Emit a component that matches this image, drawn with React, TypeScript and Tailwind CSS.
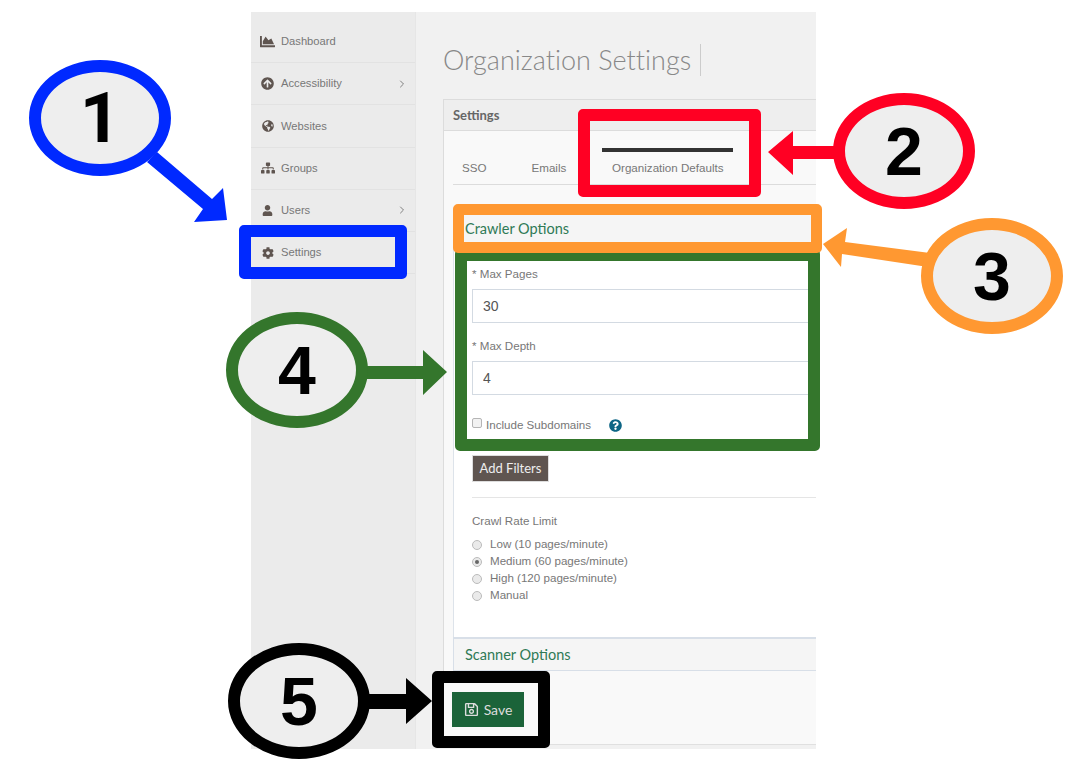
import { FaChartArea, FaArrowCircleUp, FaGlobeAmericas, FaSitemap, FaUser, FaCog, FaRegSave, FaQuestionCircle } from "react-icons/fa";
import { ChevronRight } from "lucide-react";
import type { IconType } from "react-icons";

type NavItem = { label: string; icon: IconType; size: string; sub?: boolean };

const NAV: NavItem[] = [
  { label: "Dashboard", icon: FaChartArea, size: "text-[15px]" },
  { label: "Accessibility", icon: FaArrowCircleUp, size: "text-[13px]", sub: true },
  { label: "Websites", icon: FaGlobeAmericas, size: "text-[12px]" },
  { label: "Groups", icon: FaSitemap, size: "text-[14px]" },
  { label: "Users", icon: FaUser, size: "text-[11px]", sub: true },
  { label: "Settings", icon: FaCog, size: "text-[12px]" },
];

const RATES = [
  { label: "Low (10 pages/minute)", checked: false },
  { label: "Medium (60 pages/minute)", checked: true },
  { label: "High (120 pages/minute)", checked: false },
  { label: "Manual", checked: false },
];

function Sidebar() {
  return (
    <aside className="w-[165px] shrink-0 border-r border-[#e6e6e6] bg-[#ebebeb] pt-[9px]">
      {NAV.map(({ label, icon: Icon, size, sub }) => (
        <div key={label} className="flex h-[42.2px] items-center border-b border-[#e2e2e2] pl-[10px] pr-[7px] text-[11.2px] text-[#777]">
          <span className="flex w-[13px] shrink-0 justify-center"><Icon className={`shrink-0 text-[#5f5550] ${size}`} /></span>
          <span className="ml-[7px] flex-1">{label}</span>
          {sub && <ChevronRight size={12} strokeWidth={2} className="text-[#808080]" />}
        </div>
      ))}
    </aside>
  );
}

function Tabs() {
  return (
    <div className="flex h-[54px] items-end border-b border-[#dcdcdc] text-[11.6px] text-[#777]">
      <span className="ml-[9px] pb-[8px]">SSO</span>
      <span className="ml-[45px] pb-[8px]">Emails</span>
      <div className="ml-[36px] w-[131px] pb-[8px]">
        <div className="mb-[7px] h-[4px] bg-[#333]" />
        <div className="text-center">Organization Defaults</div>
      </div>
    </div>
  );
}

function Field({ label, value }: { label: string; value: string }) {
  return (
    <div>
      <div className="h-[13px] text-[11.6px] leading-[11px] text-[#777]">{label}</div>
      <input
        readOnly
        value={value}
        className="mt-[8px] block h-[34px] w-[360px] border border-[#d3dae2] bg-white pl-[10px] text-[14px] text-[#555] outline-none"
      />
    </div>
  );
}

function CrawlerForm() {
  return (
    <div className="flex h-[390px] flex-col border-l border-[#dde3ea] bg-white pl-[18px] pt-[21px]">
      <Field label="* Max Pages" value="30" />
      <div className="mt-[17px]">
        <Field label="* Max Depth" value="4" />
      </div>
      <div className="mt-[23px] flex h-[14px] items-center text-[11.6px] text-[#777]">
        <span className="mb-[4px] h-[10px] w-[10px] rounded-[2px] border border-[#b5b5b5] bg-[#f2f2f2]" />
        <span className="ml-[4px]">Include Subdomains</span>
        <FaQuestionCircle className="ml-[18px] text-[13px] text-[#0d6585]" />
      </div>
      <div className="mt-[23px] flex h-[27px] w-[77px] items-center justify-center border border-[#ddd] bg-[#5f5550] text-[13px] text-[#eee] [font-family:Lato,sans-serif]">
        Add Filters
      </div>
      <div className="mt-[15px] h-[1px] bg-[#e5e5e5]" />
      <div className="mt-[17px] text-[11.6px] leading-[11px] text-[#777]">Crawl Rate Limit</div>
      <div className="mt-[10px] flex flex-col">
        {RATES.map((r) => (
          <div key={r.label} className="flex h-[17px] items-center text-[11.6px] text-[#777]">
            <span className="flex h-[10px] w-[10px] items-center justify-center rounded-full border border-[#bbb] bg-[#eaeaea]">
              {r.checked && <span className="h-[4px] w-[4px] rounded-full bg-[#666]" />}
            </span>
            <span className="ml-[8px] pb-[2px]">{r.label}</span>
          </div>
        ))}
      </div>
    </div>
  );
}

function Panel() {
  return (
    <section className="mt-[21px] w-[400px] border-l border-t border-[#dcdcdc] bg-[#f9f9f9]">
      <div className="flex h-[31px] items-center border-b border-[#dcdcdc] bg-[#eeeeee] pl-[9px] pt-[2px] text-[13px] font-bold text-[#666] [font-family:Lato,sans-serif]">
        Settings
      </div>
      <div className="pl-[9px]">
        <Tabs />
        <div className="mt-[26px] flex h-[36px] items-center border-l border-[#dde3ea] bg-[#f5f5f5] pl-[11px] text-[14.5px] text-[#2f7a55] [font-family:Lato,sans-serif]">
          Crawler Options
        </div>
        <CrawlerForm />
        <div className="flex h-[34px] items-center border-b border-l border-t-2 border-[#d8dfe8] bg-[#f5f5f5] pl-[11px] text-[14.5px] text-[#2f7a55] [font-family:Lato,sans-serif]">
          Scanner Options
        </div>
        <div className="h-[74px] border-b border-[#e0e0e0] pt-[21px]">
          <div className="-ml-[1px] flex h-[35px] w-[72px] items-center justify-center gap-[5px] bg-[#1b6339] text-[14px] text-[#ddd] [font-family:Lato,sans-serif]">
            <FaRegSave className="text-[15px]" />
            Save
          </div>
        </div>
      </div>
    </section>
  );
}

// the callout ovals and boxes sit on top of the screenshot
function Oval({ n, x, y, color, font }: { n: string; x: string; y: string; color: string; font: string }) {
  return (
    <div
      className={`absolute flex h-[116px] w-[142px] items-center justify-center rounded-[50%] border-[12px] bg-[#eeeeee] font-bold text-black ${font} ${x} ${y} ${color}`}
    >
      {n}
    </div>
  );
}

const DIGIT = "text-[68px] [font-family:'Liberation_Sans',Arial,sans-serif]";

function Callouts() {
  return (
    <>
      <svg className="pointer-events-none absolute inset-0" width="1085" height="769" viewBox="0 0 1085 769" aria-hidden="true">
        <polygon fill="#0029ff" points="157,152 147,162 203,209 194,222 227,220 223,188 212,199" />
        <polygon fill="#ff0023" points="768,152 793,131 793,146 840,146 840,159 793,159 793,175" />
        <polygon fill="#ff9831" points="823,244 847,228 845,242 930,253 928,267 842,254 841,267" />
        <polygon fill="#34762c" points="360,366 423,366 423,350 447,372 423,395 423,379 360,379" />
        <polygon fill="#000000" points="365,694 406,694 406,678 432,701 406,724 406,709 365,709" />
      </svg>
      <div className="absolute left-[455px] top-[249px] h-[202px] w-[365px] rounded-[5px] border-[12px] border-[#34762c]" />
      <div className="absolute left-[239px] top-[225px] h-[54px] w-[168px] rounded-[5px] border-[12px] border-[#0029ff]" />
      <div className="absolute left-[578px] top-[109px] h-[88px] w-[183px] rounded-[5px] border-[12px] border-[#ff0023]" />
      <div className="absolute left-[453px] top-[204px] h-[49px] w-[369px] rounded-[5px] border-[11px] border-[#ff9831]" />
      <div className="absolute left-[432px] top-[671px] h-[77px] w-[118px] rounded-[5px] border-[12px] border-black" />
      {/* Liberation's bold 1 has a foot, the reference's has none */}
      <Oval n="1" x="left-[29px]" y="top-[60px]" color="border-[#0029ff]" font="text-[71px] [font-family:Roboto,sans-serif]" />
      <Oval n="2" x="left-[833px]" y="top-[93px]" color="border-[#ff0023]" font={DIGIT} />
      <Oval n="3" x="left-[921px]" y="top-[218px]" color="border-[#ff9831]" font={DIGIT} />
      <Oval n="4" x="left-[226px]" y="top-[312px]" color="border-[#34762c]" font={DIGIT} />
      <Oval n="5" x="left-[228px]" y="top-[643px]" color="border-black" font={DIGIT} />
    </>
  );
}

export default function App() {
  return (
    <div className="relative h-[769px] w-[1085px] overflow-hidden bg-white pl-[251px] pt-[12px] [font-family:'Liberation_Sans',Arial,sans-serif]">
      <div className="flex h-[737px] w-[565px] overflow-hidden">
        <Sidebar />
        <main className="flex-1 overflow-hidden bg-[#f1f1f1] pl-[27px] pt-[30px]">
          <div className="flex h-[36px] items-center">
            <h1 className="text-[27px] font-light text-[#888] [font-family:Lato,sans-serif] [font-variant-ligatures:none]">Organization Settings</h1>
            <span className="ml-[9px] h-[32px] w-[1px] bg-[#ccc]" />
          </div>
          <Panel />
        </main>
      </div>
      <Callouts />
    </div>
  );
}
